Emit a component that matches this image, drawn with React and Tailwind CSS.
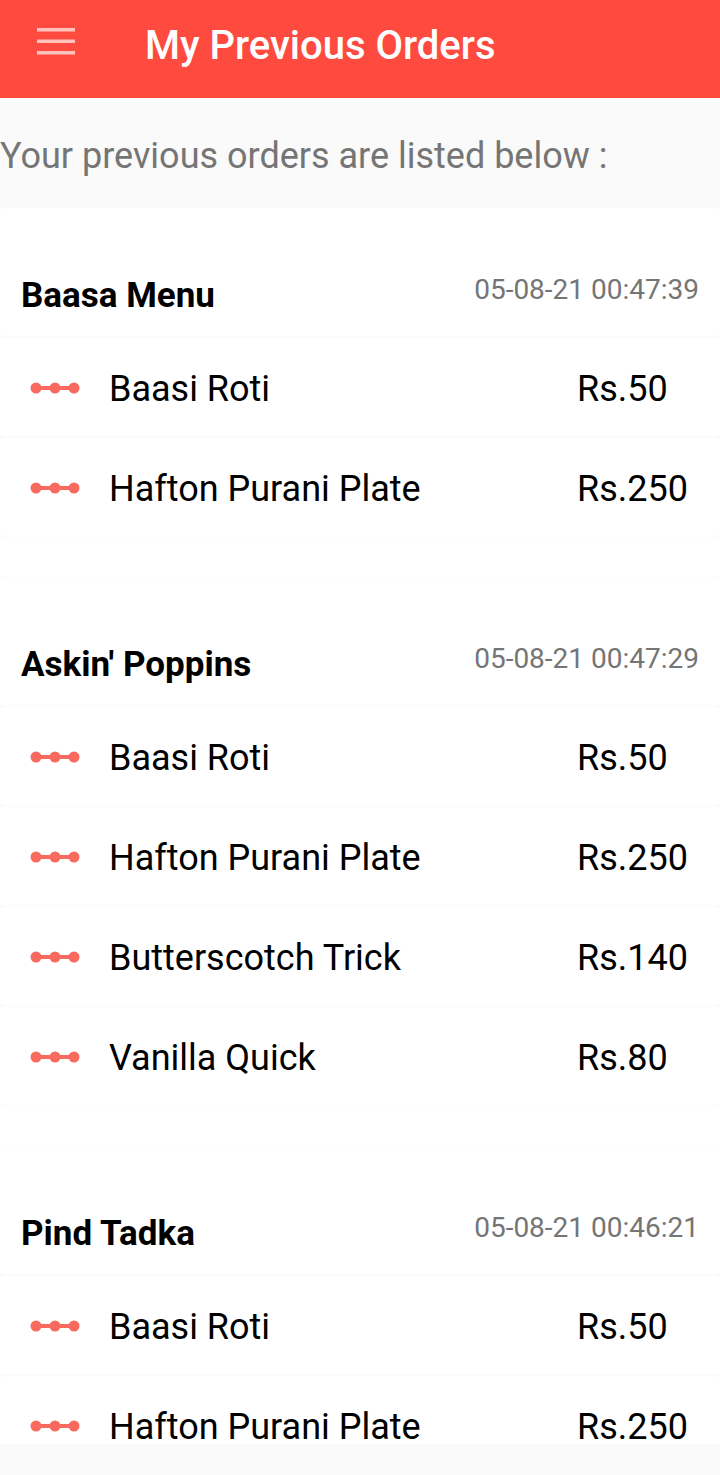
const ORDERS = [
  {
    name: 'Baasa Menu',
    date: '05-08-21 00:47:39',
    items: [
      { title: 'Baasi Roti', price: 50 },
      { title: 'Hafton Purani Plate', price: 250 },
    ],
  },
  {
    name: "Askin' Poppins",
    date: '05-08-21 00:47:29',
    items: [
      { title: 'Baasi Roti', price: 50 },
      { title: 'Hafton Purani Plate', price: 250 },
      { title: 'Butterscotch Trick', price: 140 },
      { title: 'Vanilla Quick', price: 80 },
    ],
  },
  {
    name: 'Pind Tadka',
    date: '05-08-21 00:46:21',
    items: [
      { title: 'Baasi Roti', price: 50 },
      { title: 'Hafton Purani Plate', price: 250 },
    ],
  },
]

function Dumbbell() {
  return (
    <svg width="50" height="16" viewBox="0 0 50 16" className="shrink-0">
      <line x1="6" y1="8" x2="44" y2="8" stroke="#f96a5e" strokeWidth="4" strokeLinecap="round" />
      <circle cx="6" cy="8" r="5.5" fill="#f96a5e" />
      <circle cx="25" cy="8" r="5.5" fill="#f96a5e" />
      <circle cx="44" cy="8" r="5.5" fill="#f96a5e" />
    </svg>
  )
}

function ItemRow({ title, price }) {
  return (
    <div className="h-[100px] flex items-center pt-[2px] rounded-[4px] shadow-[0_0_1px_rgba(0,0,0,0.12)]">
      <div className="pl-[30px] w-[109px]">
        <Dumbbell />
      </div>
      <p className="flex-1 text-[36px] text-black leading-none pt-[2px]">{title}</p>
      <p className="w-[143px] text-[36px] text-black leading-none pt-[2px]">Rs.{price}</p>
    </div>
  )
}

function OrderCard({ order, first }) {
  return (
    <div className={first ? '' : 'mt-[40px]'}>
      <div className="h-[129px] flex justify-between px-[21px] rounded-[4px] shadow-[0_0_1px_rgba(0,0,0,0.12)]">
        <h2 className="pt-[68px] text-[35px] font-bold leading-[40px] text-black">{order.name}</h2>
        <span className="pt-[66px] text-[28px] leading-[32px] text-[#757575]">{order.date}</span>
      </div>
      {order.items.map((it, i) => (
        <ItemRow key={i} {...it} />
      ))}
    </div>
  )
}

export default function App() {
  return (
    <div className="w-[720px] h-[1475px] overflow-hidden flex flex-col bg-[#fafafa] font-['Roboto',sans-serif]">
      {/* Toolbar */}
      <div className="h-[98px] shrink-0 bg-[#ff4b3f] flex items-start">
        <svg width="38" height="27" viewBox="0 0 38 27" className="ml-[37px] mt-[28px] shrink-0">
          <rect x="0" y="0" width="38" height="3.5" fill="#ffc3bc" />
          <rect x="0" y="11.5" width="38" height="3.5" fill="#ffc3bc" />
          <rect x="0" y="23" width="38" height="3.5" fill="#ffc3bc" />
        </svg>
        <h1 className="ml-[70px] mt-[24px] text-[40px] font-medium text-white leading-[44px]">My Previous Orders</h1>
      </div>

      <div className="h-[110px] shrink-0 flex items-center pt-[6px]">
        <p className="text-[36px] text-[#757575] leading-none">Your previous orders are listed below :</p>
      </div>

      <div className="h-[1236px] shrink-0 overflow-hidden bg-white">
        {ORDERS.map((o, i) => (
          <OrderCard key={i} order={o} first={i === 0} />
        ))}
      </div>
    </div>
  )
}
